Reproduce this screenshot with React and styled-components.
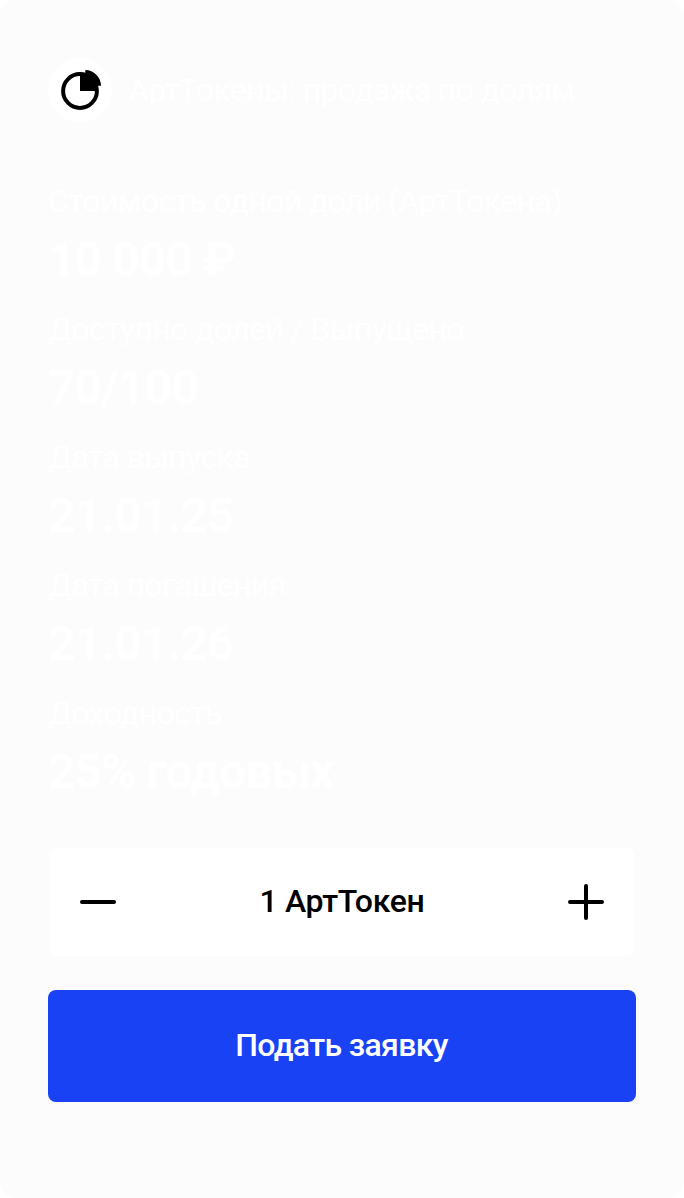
import React from "react";
import styled, { createGlobalStyle } from "styled-components";

const Global = createGlobalStyle`
  * { box-sizing: border-box; }
  body { margin: 0; background: #fff; font-family: Roboto, "Noto Sans", sans-serif; }
`;
const Card = styled.main`
  width: 684px;
  height: 1198px;
  padding: 58px 48px 0;
  border-radius: 16px;
  background: #fcfcfc;
  color: #fff;
  letter-spacing: -0.02em;
`;
const Header = styled.header`
  display: flex;
  align-items: center;
  gap: 16px;
  height: 64px;
`;
const Badge = styled.div`
  width: 64px;
  height: 64px;
  border-radius: 50%;
  background: #fff;
  svg { display: block; }
`;
const Title = styled.h1`
  margin: 0;
  font-size: 32px;
  font-weight: 400;
  line-height: 40px;
  letter-spacing: -0.02em;
  white-space: nowrap;
`;
const Facts = styled.dl`
  margin: 57px 0 0;
`;
const Fact = styled.div`
  height: 128px;
`;
const Label = styled.dt`
  font-size: 32px;
  line-height: 44px;
  letter-spacing: -0.02em;
  white-space: nowrap;
`;
const Value = styled.dd`
  margin: 9px 0 0;
  font-size: 48px;
  font-weight: 700;
  line-height: 56px;
  letter-spacing: -0.02em;
`;
const Stepper = styled.div`
  display: flex;
  align-items: center;
  justify-content: space-between;
  height: 108px;
  margin: 29px 2px 0;
  padding: 0 28px;
  border-radius: 8px;
  background: #fff;
`;
const StepButton = styled.button`
  width: 40px;
  height: 40px;
  padding: 0;
  border: 0;
  background: none;
  svg { display: block; }
`;
const Amount = styled.span`
  padding-bottom: 2px;
  color: #000;
  font-size: 32px;
  font-weight: 500;
  line-height: 40px;
  letter-spacing: -0.01em;
`;
const Submit = styled.button`
  display: block;
  width: 100%;
  height: 112px;
  margin-top: 34px;
  padding: 0 1px 2px 0;
  border: 0;
  border-radius: 8px;
  background: #1a42f5;
  color: #fff;
  font: 500 32px/40px Roboto, "Noto Sans", sans-serif;
  letter-spacing: -0.02em;
`;

const facts = [
  ["Стоимость одной доли (АртТокена)", "10 000 ₽"],
  ["Доступно долей / Выпущено", "70/100"],
  ["Дата выпуска", "21.01.25"],
  ["Дата погашения", "21.01.26"],
  ["Доходность", "25% годовых"],
];

export default function App() {
  return (
    <>
      <Global />
      <Card>
        <Header>
          <Badge>
            <svg width="64" height="64" viewBox="0 0 64 64" fill="none">
              <circle cx="32" cy="33" r="16.9" stroke="#000" strokeWidth="4" />
              <path d="M37.3 12A16 16 0 0 1 53 27.8H49.5V33H32V15.5H37.3z" fill="#000" />
            </svg>
          </Badge>
          <Title>АртТокены: продажа по долям</Title>
        </Header>
        <Facts>
          {facts.map(([label, value]) => (
            <Fact key={label}>
              <Label>{label}</Label>
              <Value>{value}</Value>
            </Fact>
          ))}
        </Facts>
        <Stepper>
          <StepButton aria-label="Уменьшить">
            <svg width="40" height="40" viewBox="0 0 40 40" stroke="#000" strokeWidth="4" strokeLinecap="round">
              <path d="M4 20h32" />
            </svg>
          </StepButton>
          <Amount>1 АртТокен</Amount>
          <StepButton aria-label="Увеличить">
            <svg width="40" height="40" viewBox="0 0 40 40" stroke="#000" strokeWidth="4" strokeLinecap="round">
              <path d="M4 20h32M20 4v32" />
            </svg>
          </StepButton>
        </Stepper>
        <Submit>Подать заявку</Submit>
      </Card>
    </>
  );
}
